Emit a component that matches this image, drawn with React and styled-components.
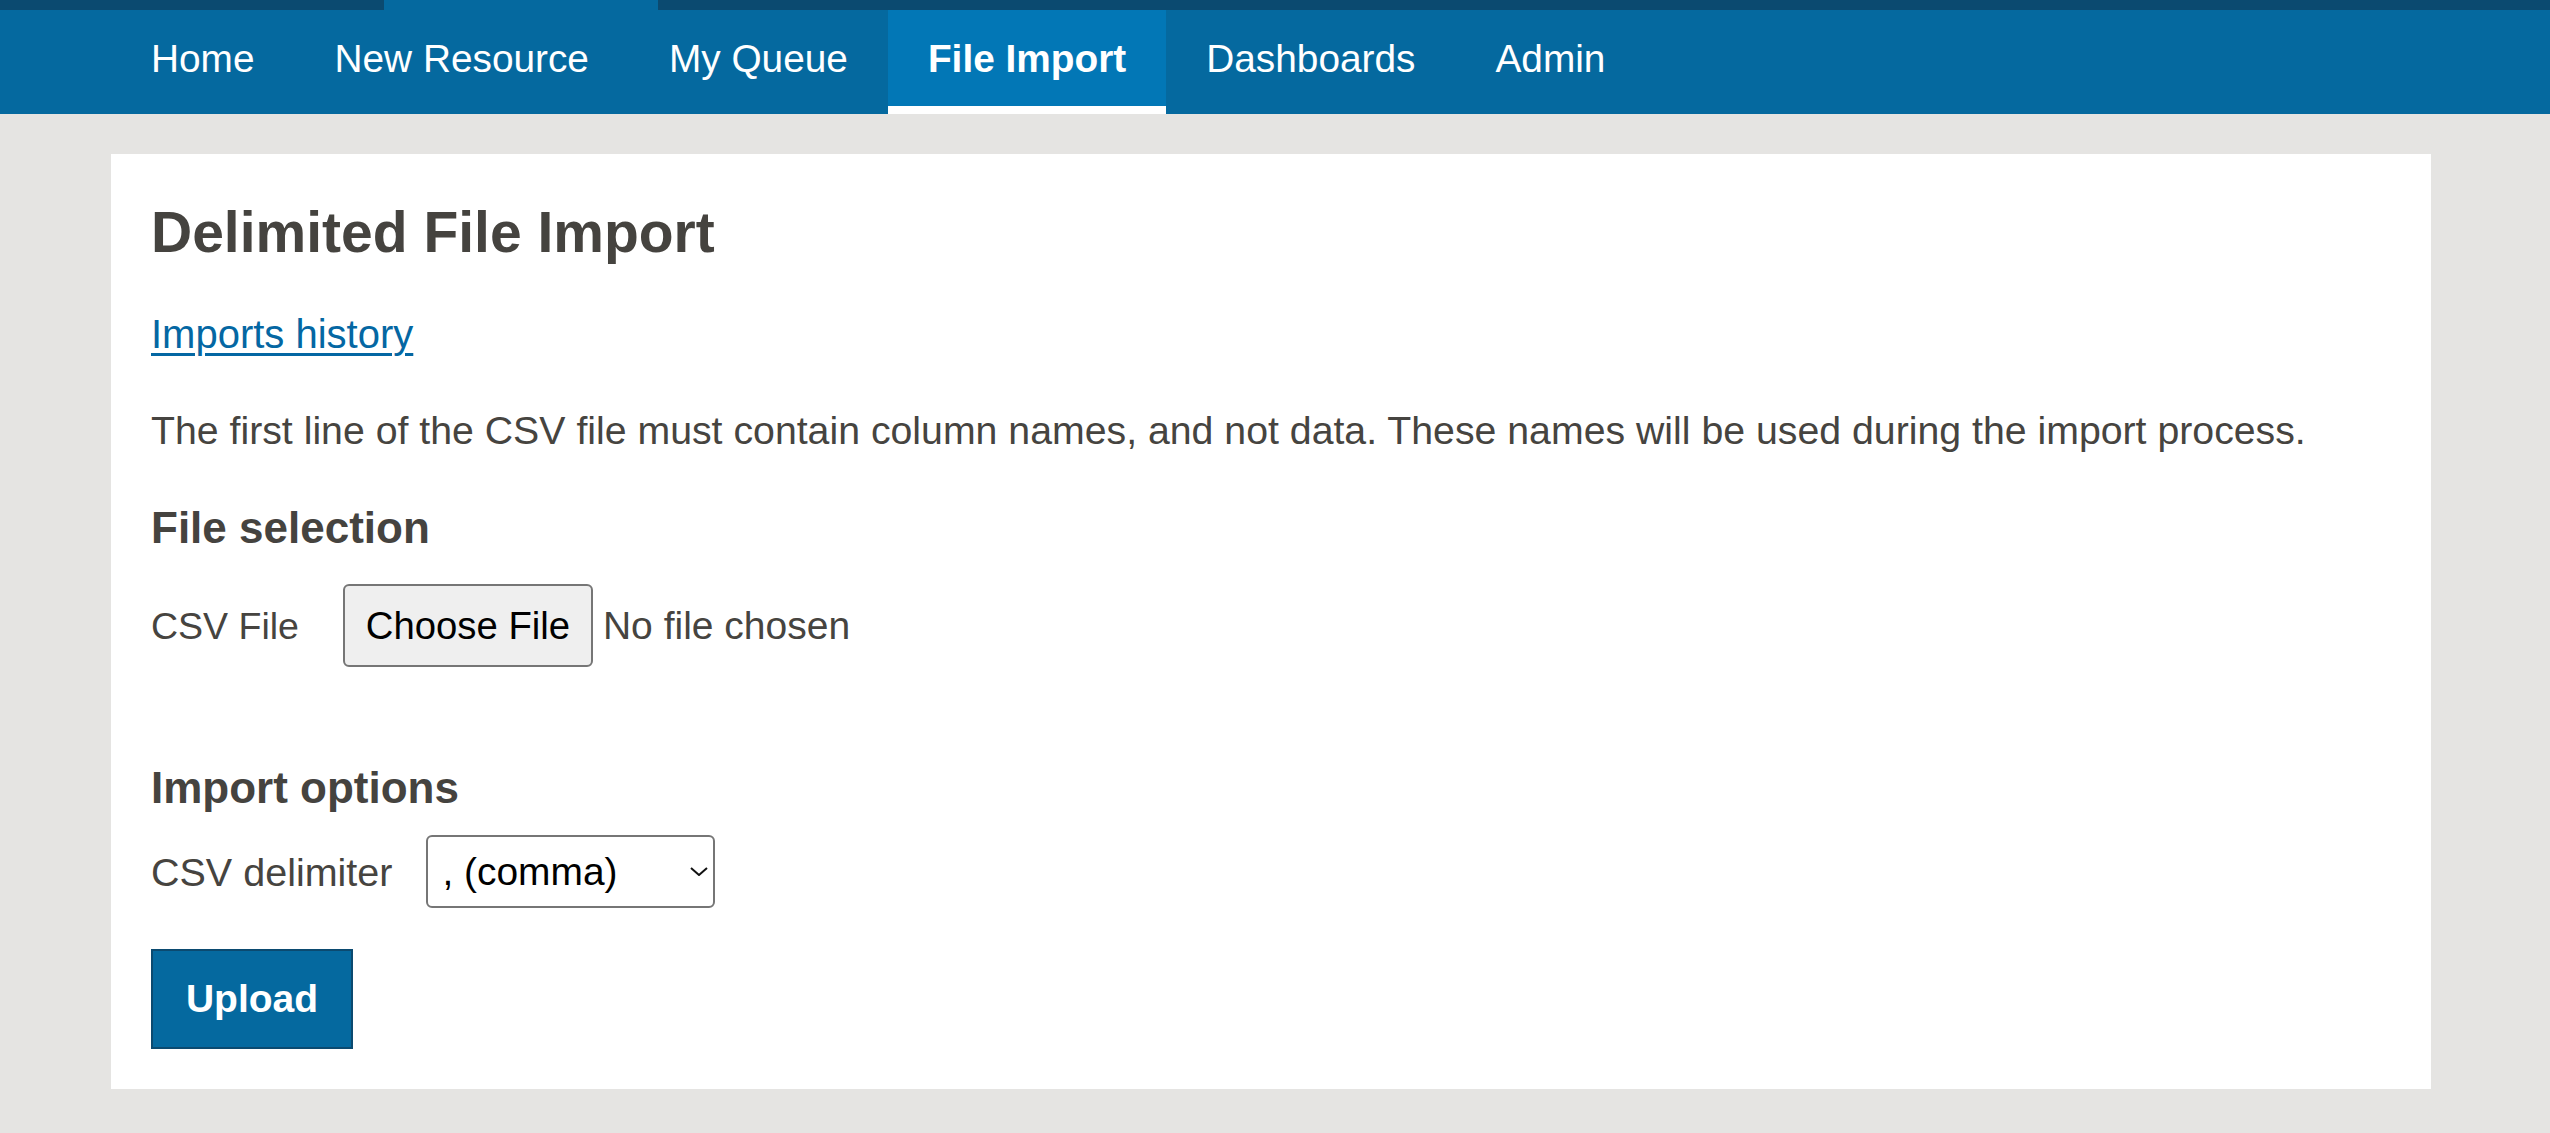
import styled, { createGlobalStyle } from "styled-components";

const GlobalStyle = createGlobalStyle`
  html, body {
    margin: 0;
    padding: 0;
    background: #e5e4e2;
  }
  body {
    font-family: "Liberation Sans", Arial, sans-serif;
    color: #464440;
    min-height: 100vh;
  }
`;

const navItems = [
  { label: "Home" },
  { label: "New Resource" },
  { label: "My Queue" },
  { label: "File Import", active: true },
  { label: "Dashboards" },
  { label: "Admin" },
];

export default function App() {
  return (
    <>
      <GlobalStyle />
      <Header>
        <TopStrip>
          <StripMark />
        </TopStrip>
        <NavBar>
          {navItems.map((item) => (
            <NavItem key={item.label} $active={item.active}>
              {item.label}
            </NavItem>
          ))}
        </NavBar>
      </Header>

      <Main>
        <Card>
          <Title>Delimited File Import</Title>
          <HistoryLink href="#">Imports history</HistoryLink>
          <Intro>
            The first line of the CSV file must contain column names, and not
            data. These names will be used during the import process.
          </Intro>

          <SectionTitle $top="47px">File selection</SectionTitle>
          <FieldRow $top="30px">
            <FieldLabel $gap="44px" $size="37.5px">CSV File</FieldLabel>
            <FileButton type="button">Choose File</FileButton>
            <FileName>No file chosen</FileName>
          </FieldRow>

          <SectionTitle $top="94px">Import options</SectionTitle>
          <FieldRow $top="21px">
            <FieldLabel $gap="34px">CSV delimiter</FieldLabel>
            <SelectWrap>
              <Select defaultValue=",">
                <option value=",">, (comma)</option>
                <option value=";">; (semicolon)</option>
                <option value="tab">tab</option>
              </Select>
              <Chevron viewBox="0 0 18 9" width="18" height="9">
                <path d="M1 1l8 7 8-7" fill="none" stroke="#111" strokeWidth="2" />
              </Chevron>
            </SelectWrap>
          </FieldRow>

          <UploadButton type="button">Upload</UploadButton>
        </Card>
      </Main>
    </>
  );
}

const Header = styled.header`
  display: flex;
  flex-direction: column;
`;

const TopStrip = styled.div`
  display: flex;
  height: 10px;
  background: #0b4a70;
`;

const StripMark = styled.div`
  width: 274px;
  margin-left: 384px;
  background: #05699f;
`;

const NavBar = styled.nav`
  display: flex;
  height: 104px;
  padding-left: 111px;
  background: #05699f;
`;

const NavItem = styled.a`
  display: flex;
  align-items: center;
  padding: 0 40px 6px;
  font-size: 38.8px;
  font-weight: ${(p) => (p.$active ? 700 : 400)};
  color: #fff;
  background: ${(p) => (p.$active ? "#0277b6" : "transparent")};
  box-shadow: ${(p) => (p.$active ? "inset 0 -8px 0 #fff" : "none")};
  white-space: nowrap;
  cursor: pointer;
`;

const Main = styled.main`
  padding: 40px 0 44px 111px;
`;

const Card = styled.section`
  display: flex;
  flex-direction: column;
  align-items: flex-start;
  width: 2320px;
  box-sizing: border-box;
  padding: 44px 40px 40px;
  background: #fff;
`;

const Title = styled.h1`
  margin: 0;
  font-size: 57px;
  line-height: 68px;
  font-weight: 700;
  color: #45433f;
`;

const HistoryLink = styled.a`
  margin-top: 44px;
  font-size: 40px;
  line-height: 48px;
  color: #0467a3;
  text-decoration: underline;
  text-decoration-thickness: 3px;
  text-underline-offset: 5px;
`;

const Intro = styled.p`
  margin: 48px 0 0;
  font-size: 39.25px;
  line-height: 48px;
`;

const SectionTitle = styled.h3`
  margin: ${(p) => p.$top} 0 0;
  font-size: 44px;
  line-height: 53px;
  font-weight: 700;
  color: #45433f;
`;

const FieldRow = styled.div`
  display: flex;
  align-items: center;
  margin-top: ${(p) => p.$top};
`;

const FieldLabel = styled.label`
  margin-right: ${(p) => p.$gap};
  font-size: ${(p) => p.$size || "39.5px"};
  line-height: 48px;
`;

const FileButton = styled.button`
  width: 250px;
  height: 83px;
  padding: 0;
  font-family: "Liberation Sans", Arial, sans-serif;
  font-size: 38.3px;
  color: #000;
  background: #efefef;
  border: 2px solid #767676;
  border-radius: 6px;
`;

const FileName = styled.span`
  margin-left: 10px;
  font-size: 39px;
  line-height: 48px;
`;

const SelectWrap = styled.div`
  position: relative;
  display: flex;
`;

const Select = styled.select`
  appearance: none;
  width: 289px;
  height: 73px;
  padding: 0 0 0 14px;
  font-family: "Liberation Sans", Arial, sans-serif;
  font-size: 38.9px;
  color: #000;
  background: #fff;
  border: 2px solid #767676;
  border-radius: 6px;
`;

const Chevron = styled.svg`
  position: absolute;
  right: 7px;
  top: 32px;
  pointer-events: none;
`;

const UploadButton = styled.button`
  margin-top: 41px;
  width: 202px;
  height: 100px;
  padding: 0;
  font-family: "Liberation Sans", Arial, sans-serif;
  font-size: 39px;
  font-weight: 700;
  color: #fff;
  background: #05699f;
  border: 2px solid #0b4a70;
  border-radius: 0;
  cursor: pointer;
`;
